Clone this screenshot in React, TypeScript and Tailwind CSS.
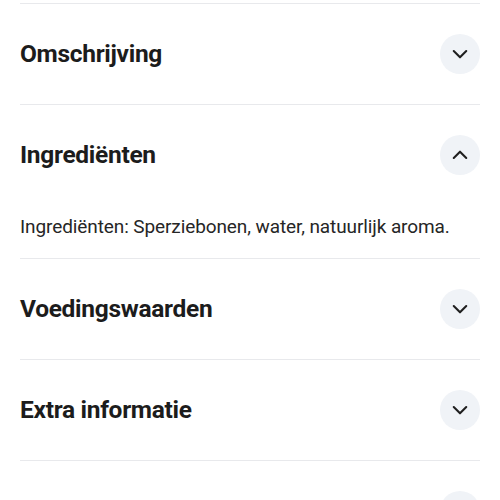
import { useState } from 'react';

interface Section {
  id: string;
  title: string;
  content?: string;
}

const sections: Section[] = [
  { id: 'prev', title: '' },
  { id: 'omschrijving', title: 'Omschrijving' },
  { id: 'ingredienten', title: 'Ingrediënten', content: 'Ingrediënten: Sperziebonen, water, natuurlijk aroma.' },
  { id: 'voeding', title: 'Voedingswaarden' },
  { id: 'extra', title: 'Extra informatie' },
  { id: 'more', title: '' },
];

function Chevron({ up }: { up: boolean }) {
  return (
    <svg width="20" height="20" viewBox="0 0 24 24" fill="none" stroke="#1f1f1f" strokeWidth="2.5" strokeLinecap="round" strokeLinejoin="round">
      {up ? <path d="M4.5 15.5l7.5-7.5 7.5 7.5" /> : <path d="M4.5 8.5l7.5 7.5 7.5-7.5" />}
    </svg>
  );
}

export default function App() {
  const [open, setOpen] = useState<string>('ingredienten');

  return (
    <div className="bg-white w-[500px] h-[500px] overflow-hidden" style={{ fontFamily: 'Roboto, "Liberation Sans", sans-serif' }}>
      <div className="-mt-[97px] px-5">
        {sections.map((s) => {
          const isOpen = open === s.id;
          return (
            <div key={s.id} className="border-t border-[#e8e9ec] first:border-t-0">
              <button
                type="button"
                onClick={() => setOpen(isOpen ? '' : s.id)}
                className="w-full h-[100px] flex items-center justify-between text-left"
              >
                <span className="text-[24.5px] font-bold text-[#1c1c1c] tracking-[-0.3px]">{s.title}</span>
                <span className="w-10 h-10 rounded-full bg-[#f0f3f7] flex items-center justify-center">
                  <Chevron up={isOpen} />
                </span>
              </button>
              {isOpen && s.content && (
                <div className="pt-[10px] pb-[19px] text-[19px] leading-6 text-[#262626] tracking-[-0.1px]">{s.content}</div>
              )}
            </div>
          );
        })}
      </div>
    </div>
  );
}
